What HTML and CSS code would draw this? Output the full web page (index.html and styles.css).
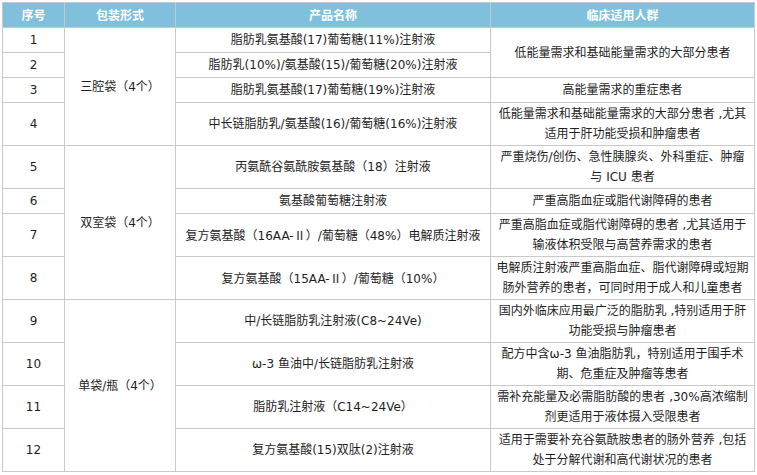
FILE: index.html
```html
<!DOCTYPE html>
<html lang="zh-CN">
<head>
<meta charset="utf-8">
<title>产品列表</title>
<link rel="stylesheet" href="styles.css">
</head>
<body>
<div class="wrap">
<table class="tbl">
  <colgroup>
    <col class="c1"><col class="c2"><col class="c3"><col class="c4">
  </colgroup>
  <thead>
    <tr class="s">
      <th>序号</th><th>包装形式</th><th>产品名称</th><th>临床适用人群</th>
    </tr>
  </thead>
  <tbody>
    <tr class="s">
      <td>1</td>
      <td rowspan="4">三腔袋（4个）</td>
      <td>脂肪乳氨基酸(17)葡萄糖(11%)注射液</td>
      <td rowspan="2">低能量需求和基础能量需求的大部分患者</td>
    </tr>
    <tr class="s">
      <td>2</td>
      <td>脂肪乳(10%)/氨基酸(15)/葡萄糖(20%)注射液</td>
    </tr>
    <tr class="s">
      <td>3</td>
      <td>脂肪乳氨基酸(17)葡萄糖(19%)注射液</td>
      <td>高能量需求的重症患者</td>
    </tr>
    <tr class="d">
      <td>4</td>
      <td>中长链脂肪乳/氨基酸(16)/葡萄糖(16%)注射液</td>
      <td>低能量需求和基础能量需求的大部分患者 ,尤其<br>适用于肝功能受损和肿瘤患者</td>
    </tr>
    <tr class="d">
      <td>5</td>
      <td rowspan="4">双室袋（4个）</td>
      <td>丙氨酰谷氨酰胺氨基酸（18）注射液</td>
      <td>严重烧伤/创伤、急性胰腺炎、外科重症、肿瘤<br>与 ICU 患者</td>
    </tr>
    <tr class="s">
      <td>6</td>
      <td>氨基酸葡萄糖注射液</td>
      <td>严重高脂血症或脂代谢障碍的患者</td>
    </tr>
    <tr class="d">
      <td>7</td>
      <td>复方氨基酸（16AA-<span class="cjk">Ⅱ</span>）/葡萄糖（48%）电解质注射液</td>
      <td>严重高脂血症或脂代谢障碍的患者 ,尤其适用于<br>输液体积受限与高营养需求的患者</td>
    </tr>
    <tr class="d">
      <td>8</td>
      <td>复方氨基酸（15AA-<span class="cjk">Ⅱ</span>）/葡萄糖（10%）</td>
      <td>电解质注射液严重高脂血症、脂代谢障碍或短期<br>肠外营养的患者，可同时用于成人和儿童患者</td>
    </tr>
    <tr class="d">
      <td>9</td>
      <td rowspan="4">单袋/瓶（4个）</td>
      <td>中/长链脂肪乳注射液(C8~24Ve)</td>
      <td>国内外临床应用最广泛的脂肪乳 ,特别适用于肝<br>功能受损与肿瘤患者</td>
    </tr>
    <tr class="d">
      <td>10</td>
      <td>ω-3 鱼油中/长链脂肪乳注射液</td>
      <td>配方中含ω-3 鱼油脂肪乳，特别适用于围手术<br>期、危重症及肿瘤等患者</td>
    </tr>
    <tr class="d">
      <td>11</td>
      <td>脂肪乳注射液（C14~24Ve）</td>
      <td>需补充能量及必需脂肪酸的患者 ,30%高浓缩制<br>剂更适用于液体摄入受限患者</td>
    </tr>
    <tr class="d">
      <td>12</td>
      <td>复方氨基酸(15)双肽(2)注射液</td>
      <td>适用于需要补充谷氨酰胺患者的肠外营养 ,包括<br>处于分解代谢和高代谢状况的患者</td>
    </tr>
  </tbody>
</table>
</div>
</body>
</html>
```

FILE: styles.css
```css
html, body {
  margin: 0;
  padding: 0;
  background: #ffffff;
}
.wrap {
  padding: 2px 0 0 2px;
}
.tbl {
  border-collapse: collapse;
  table-layout: fixed;
  width: 752px;
  font-family: "DejaVu Sans", "Noto Sans CJK SC", sans-serif;
  font-size: 12px;
  color: #1e1e1e;
  text-spacing-trim: space-all;
}
.c1 { width: 62px; }
.c2 { width: 111px; }
.c3 { width: 315px; }
.c4 { width: 264px; }
.tbl th,
.tbl td {
  border: 1px solid #c9c9c9;
  text-align: center;
  vertical-align: middle;
  padding: 0 4px;
  line-height: 20px;
  font-weight: normal;
}
.tbl th {
  background: #7fc0dd;
  color: #ffffff;
  font-weight: bold;
  font-family: "Noto Sans CJK SC", sans-serif;
}
.cjk {
  font-family: "Noto Sans CJK SC", sans-serif;
}
.tbl tr.s { height: 25px; }
.tbl tr.d { height: 43px; }
```
